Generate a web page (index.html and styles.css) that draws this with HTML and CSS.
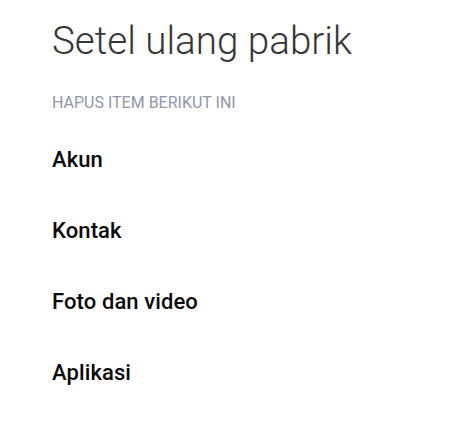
FILE: index.html
```html
<!DOCTYPE html>
<html>
<head>
<meta charset="utf-8">
<link rel="stylesheet" href="styles.css">
</head>
<body>
<main class="page">
  <h1 class="title">Setel ulang pabrik</h1>
  <div class="section">HAPUS ITEM BERIKUT INI</div>
  <ul class="list">
    <li class="item">Akun</li>
    <li class="item">Kontak</li>
    <li class="item">Foto dan video</li>
    <li class="item">Aplikasi</li>
  </ul>
</main>
</body>
</html>
```

FILE: styles.css
```css
html, body {
  margin: 0;
  padding: 0;
  background: #ffffff;
}
body {
  font-family: Roboto, "Noto Sans", sans-serif;
  width: 471px;
  height: 427px;
  overflow: hidden;
}
.page {
  padding: 19px 0 0 52px;
}
.title {
  margin: 0;
  font-weight: 300;
  font-size: 38.6px;
  line-height: 44px;
  color: #363636;
}
.section {
  margin-top: 31px;
  font-size: 16px;
  line-height: 18px;
  color: #9195ad;
}
.list {
  list-style: none;
  margin: 12px 0 0 0;
  padding: 0;
}
.item {
  font-size: 22px;
  font-weight: 500;
  line-height: 71px;
  height: 71px;
  color: #0a0a0a;
  letter-spacing: 0.1px;
}
```
